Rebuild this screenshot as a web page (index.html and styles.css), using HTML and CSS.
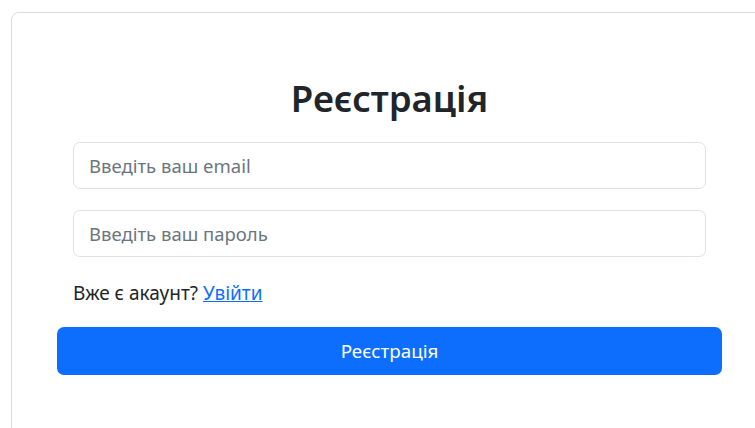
FILE: index.html
```html
<!DOCTYPE html>
<html lang="uk">
<head>
<meta charset="utf-8">
<title>Реєстрація</title>
<link rel="stylesheet" href="styles.css">
</head>
<body>
  <main class="page">
    <section class="card">
      <h2 class="card-title">Реєстрація</h2>
      <form class="form">
        <div class="fields">
          <input class="field" type="email" placeholder="Введіть ваш email">
          <input class="field" type="password" placeholder="Введіть ваш пароль">
          <p class="hint">Вже є акаунт? <a class="link" href="#">Увійти</a></p>
        </div>
        <button class="btn-primary" type="button">Реєстрація</button>
      </form>
    </section>
  </main>
</body>
</html>
```

FILE: styles.css
```css
* {
  box-sizing: border-box;
}

html, body {
  margin: 0;
  overflow: hidden;
  background: #fff;
}

body {
  font-family: "Noto Sans", "Open Sans", sans-serif;
  color: #212529;
}

.page {
  padding: 12px 0 0 11px;
}

.card {
  width: 757px;
  min-height: 440px;
  border: 1px solid #dcdcdc;
  border-radius: 8px;
  padding: 61px 45px 40px;
}

.card-title {
  margin: 0 0 20px;
  font-size: 36.5px;
  line-height: 48px;
  font-weight: 600;
  text-align: center;
}

.form {
  display: flex;
  flex-direction: column;
}

.fields {
  display: flex;
  flex-direction: column;
  gap: 21px;
  padding: 0 16px;
}

.field {
  height: 47px;
  border: 1px solid #dee2e6;
  border-radius: 7px;
  padding: 0 15px;
  font: inherit;
  font-size: 18.5px;
  color: #212529;
  outline: none;
}

.field::placeholder {
  color: #6c757d;
}

.hint {
  margin: 0;
  font-size: 19px;
  line-height: 30px;
}

.link {
  color: #0d6efd;
  text-decoration: underline;
}

.btn-primary {
  margin-top: 19px;
  height: 48px;
  border: 0;
  border-radius: 7px;
  background: #0d6efd;
  color: #fff;
  font: inherit;
  font-size: 18.8px;
}
```
